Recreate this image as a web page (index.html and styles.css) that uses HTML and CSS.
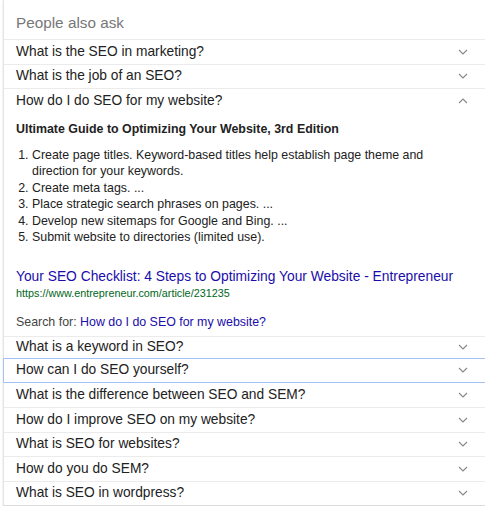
FILE: index.html
```html
<!DOCTYPE html>
<html>
<head>
<meta charset="utf-8">
<link rel="stylesheet" href="styles.css">
</head>
<body>
<div class="card">
  <div class="head">People also ask</div>
  <div class="row"><span>What is the SEO in marketing?</span><svg class="chev" viewBox="0 0 10 6"><path d="M1 1 L5 5 L9 1"/></svg></div>
  <div class="row"><span>What is the job of an SEO?</span><svg class="chev" viewBox="0 0 10 6"><path d="M1 1 L5 5 L9 1"/></svg></div>
  <div class="row"><span>How do I do SEO for my website?</span><svg class="chev" viewBox="0 0 10 6"><path d="M1 5 L5 1 L9 5"/></svg></div>
  <div class="answer">
    <div class="title">Ultimate Guide to Optimizing Your Website, 3rd Edition</div>
    <ol class="steps">
      <li>Create page titles. Keyword-based titles help establish page theme and direction for your keywords.</li>
      <li>Create meta tags. ...</li>
      <li>Place strategic search phrases on pages. ...</li>
      <li>Develop new sitemaps for Google and Bing. ...</li>
      <li>Submit website to directories (limited use).</li>
    </ol>
    <a class="link" href="#">Your SEO Checklist: 4 Steps to Optimizing Your Website - Entrepreneur</a>
    <div class="url">https://www.entrepreneur.com/article/231235</div>
    <div class="search">Search for: <a href="#">How do I do SEO for my website?</a></div>
  </div>
  <div class="row first"><span>What is a keyword in SEO?</span><svg class="chev" viewBox="0 0 10 6"><path d="M1 1 L5 5 L9 1"/></svg></div>
  <div class="row focus"><span>How can I do SEO yourself?</span><svg class="chev" viewBox="0 0 10 6"><path d="M1 1 L5 5 L9 1"/></svg></div>
  <div class="row after"><span>What is the difference between SEO and SEM?</span><svg class="chev" viewBox="0 0 10 6"><path d="M1 1 L5 5 L9 1"/></svg></div>
  <div class="row"><span>How do I improve SEO on my website?</span><svg class="chev" viewBox="0 0 10 6"><path d="M1 1 L5 5 L9 1"/></svg></div>
  <div class="row"><span>What is SEO for websites?</span><svg class="chev" viewBox="0 0 10 6"><path d="M1 1 L5 5 L9 1"/></svg></div>
  <div class="row"><span>How do you do SEM?</span><svg class="chev" viewBox="0 0 10 6"><path d="M1 1 L5 5 L9 1"/></svg></div>
  <div class="row"><span>What is SEO in wordpress?</span><svg class="chev" viewBox="0 0 10 6"><path d="M1 1 L5 5 L9 1"/></svg></div>
</div>
</body>
</html>
```
FILE: styles.css
```css
html, body {
  margin: 0;
  padding: 0;
  background: #fff;
}
body {
  font-family: "Liberation Sans", Arial, sans-serif;
  color: #222;
}
.card {
  margin-left: 3px;
  width: 490px;
  border-left: 1px solid #e4e4e4;
  border-bottom: 1px solid #dcdcdc;
  box-shadow: 0 1px 2px rgba(0,0,0,0.12);
}
.head {
  height: 39px;
  box-sizing: border-box;
  padding: 14px 0 0 12px;
  font-size: 15.3px;
  line-height: 17px;
  color: #777;
}
.row {
  height: 24.5px;
  box-sizing: border-box;
  border-top: 1px solid #ebebeb;
  display: flex;
  align-items: center;
  padding: 0 0 0 12px;
  font-size: 13.75px;
  color: #222;
}
.row span {
  flex: 1;
  line-height: 20px;
}
.chev {
  width: 10px;
  height: 6px;
  margin-right: 26px;
  fill: none;
  stroke: #8a8a8a;
  stroke-width: 1.2;
}
.row.first {
  height: 22px;
}
.row.focus {
  border: 1px solid #a3c2fa;
  border-right: none;
  margin-left: -1px;
  padding-left: 12px;
  height: 25px;
}
.row.after {
  border-top: none;
}
.answer {
  padding: 8px 0 5px 12px;
  font-size: 12.4px;
  line-height: 16px;
}
.title {
  font-weight: bold;
  margin-bottom: 10px;
}
.steps {
  margin: 0 0 22px 0;
  padding-left: 16px;
  width: 400px;
}
.steps li {
  line-height: 16.5px;
}
.link {
  display: block;
  color: #1a0dab;
  text-decoration: none;
  font-size: 13.8px;
  line-height: 18px;
}
.url {
  color: #006621;
  font-size: 10.8px;
  line-height: 14px;
  margin-bottom: 13px;
}
.search {
  color: #444;
  line-height: 18px;
}
.search a {
  color: #1a0dab;
  text-decoration: none;
}
```
